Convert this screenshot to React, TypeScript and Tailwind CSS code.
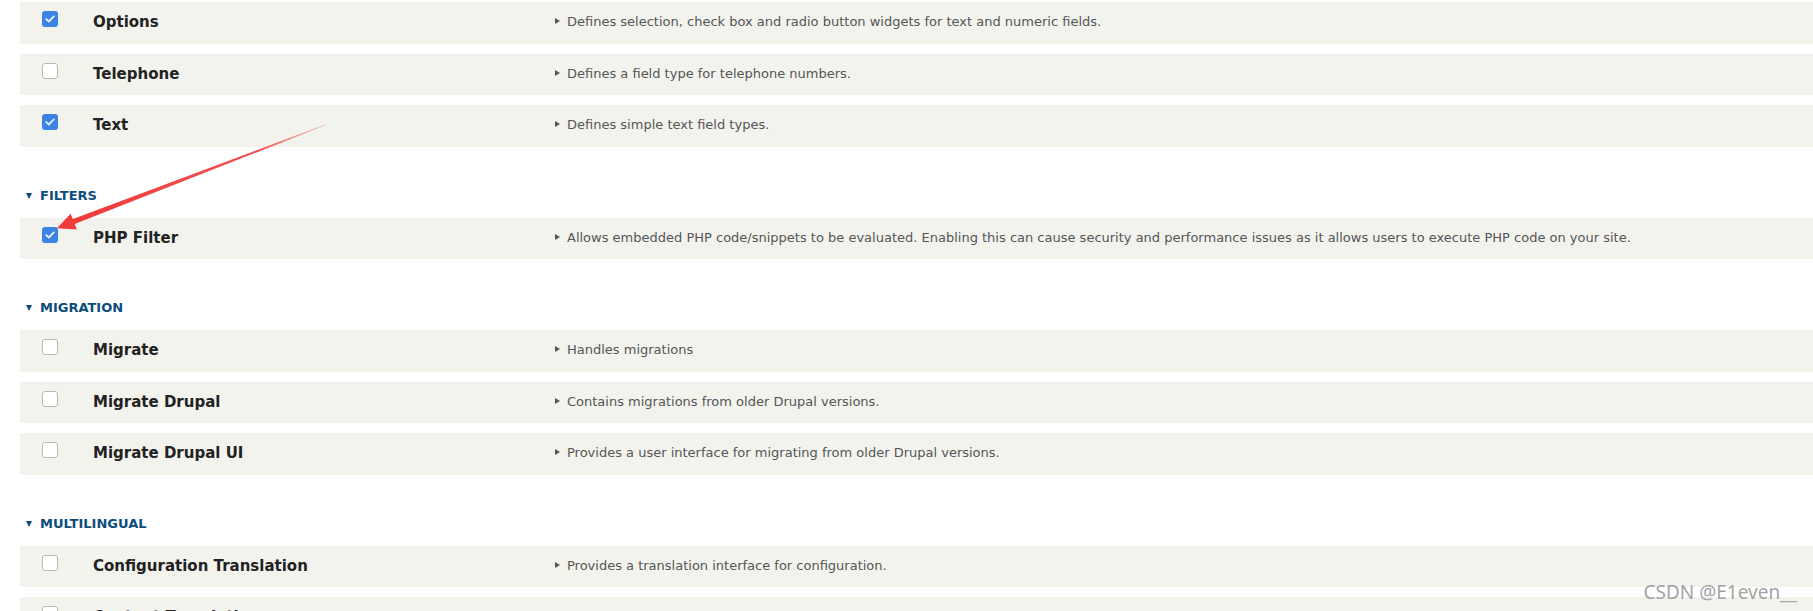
import React from 'react';

type Module = {
  name: string;
  description: string;
  checked?: boolean;
};

type Section = {
  title?: string;
  modules: Module[];
};

const sections: Section[] = [
  {
    modules: [
      { name: 'Options', description: 'Defines selection, check box and radio button widgets for text and numeric fields.', checked: true },
      { name: 'Telephone', description: 'Defines a field type for telephone numbers.' },
      { name: 'Text', description: 'Defines simple text field types.', checked: true },
    ],
  },
  {
    title: 'Filters',
    modules: [
      {
        name: 'PHP Filter',
        description:
          'Allows embedded PHP code/snippets to be evaluated. Enabling this can cause security and performance issues as it allows users to execute PHP code on your site.',
        checked: true,
      },
    ],
  },
  {
    title: 'Migration',
    modules: [
      { name: 'Migrate', description: 'Handles migrations' },
      { name: 'Migrate Drupal', description: 'Contains migrations from older Drupal versions.' },
      { name: 'Migrate Drupal UI', description: 'Provides a user interface for migrating from older Drupal versions.' },
    ],
  },
  {
    title: 'Multilingual',
    modules: [
      { name: 'Configuration Translation', description: 'Provides a translation interface for configuration.' },
      { name: 'Content Translation', description: 'Allows users to translate content entities.' },
    ],
  },
];

function Checkbox({ checked }: { checked?: boolean }) {
  if (checked) {
    return (
      <span className="flex h-[16px] w-[16px] items-center justify-center rounded-[3px] bg-[#3d83e4]">
        <svg width="10" height="8" viewBox="0 0 10 8" fill="none">
          <path d="M1.2 4.1 L3.8 6.5 L8.8 1.4" stroke="#dfeafb" strokeWidth="1.9" strokeLinecap="round" strokeLinejoin="round" />
        </svg>
      </span>
    );
  }
  return <span className="block h-[16px] w-[16px] rounded-[3px] border border-[#bab8b3] bg-white" />;
}

function ModuleRow({ module }: { module: Module }) {
  return (
    <div className="mb-[10px] flex h-[41.5px] shrink-0 bg-[#f3f3ee]">
      <div className="w-[73px] shrink-0 pl-[22px] pt-[9px]">
        <Checkbox checked={module.checked} />
      </div>
      <div className="w-[462px] shrink-0 pt-[10px] text-[15px] font-bold leading-[20px] text-[#222222] [font-family:'DejaVu_Sans',sans-serif]">
        {module.name}
      </div>
      <div className="flex items-start pt-[11px] text-[13px] leading-[17px] text-[#555555] [font-family:'DejaVu_Sans',sans-serif]">
        <span className="mr-[7px] mt-[5px] h-0 w-0 border-y-[3.5px] border-l-[5px] border-y-transparent border-l-[#555555]" />
        <span className="whitespace-nowrap">{module.description}</span>
      </div>
    </div>
  );
}

function SectionHeading({ title }: { title: string }) {
  return (
    <div className="mb-[12px] mt-[29px] flex h-[20px] items-center pl-[6px] text-[13px] font-bold uppercase text-[#0c4d7c] [font-family:'DejaVu_Sans',sans-serif]">
      <span className="mr-[8px] h-0 w-0 border-x-[3.5px] border-t-[6px] border-x-transparent border-t-[#0c4d7c]" />
      {title}
    </div>
  );
}

function Arrow() {
  return (
    <svg className="pointer-events-none absolute left-0 top-0" width="400" height="260" viewBox="0 0 400 260">
      <defs>
        <linearGradient id="arrowFade" x1="325" y1="125" x2="57" y2="228" gradientUnits="userSpaceOnUse">
          <stop offset="0" stopColor="#f24848" stopOpacity="0.25" />
          <stop offset="0.25" stopColor="#f03c3c" stopOpacity="0.9" />
          <stop offset="1" stopColor="#f03a3a" />
        </linearGradient>
      </defs>
      <polygon
        points="324.9,124.6 72.9,219.0 70.6,213.8 57,228.3 76.9,229.6 74.7,224.0 325.1,125.4"
        fill="url(#arrowFade)"
      />
    </svg>
  );
}

export default function App() {
  return (
    <div className="relative h-[611px] overflow-hidden bg-white">
      <div className="flex flex-col pl-[20px] pt-[2px]">
        {sections.map((section, i) => (
          <div key={i} className="flex flex-col">
            {section.title && <SectionHeading title={section.title} />}
            {section.modules.map((m) => (
              <ModuleRow key={m.name} module={m} />
            ))}
          </div>
        ))}
      </div>
      <Arrow />
      <div className="pointer-events-none absolute right-[16px] top-[580px] text-[19px] leading-[24px] text-[#a3a3a3] [font-family:'Noto_Sans',sans-serif]">
        CSDN @E1even__
      </div>
    </div>
  );
}
